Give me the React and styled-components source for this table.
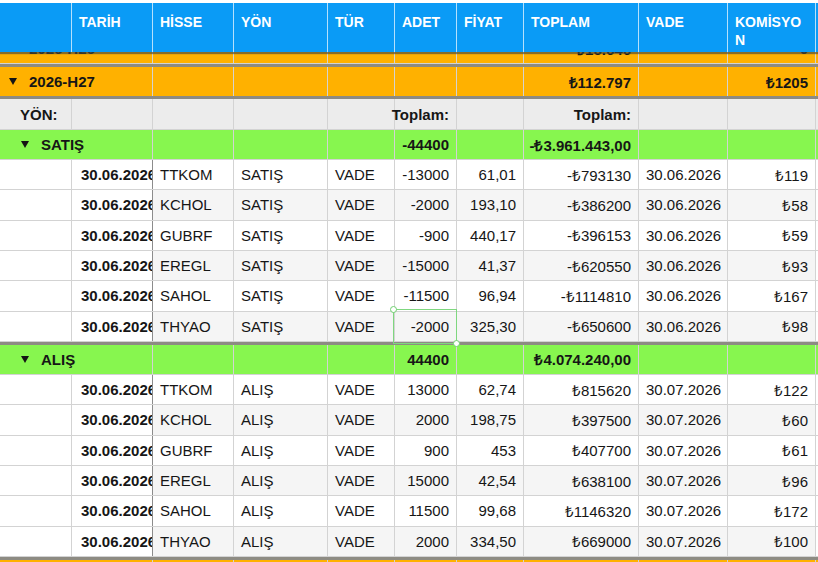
import React from 'react';
import styled, { createGlobalStyle } from 'styled-components';

const COLS = '72px 81px 81px 94px 67px 62px 67px 115px 89px 88px';

const GlobalStyle = createGlobalStyle`
  body {
    margin: 0;
    background: #fff;
    font-family: 'Liberation Sans', Arial, Helvetica, sans-serif;
  }
`;

const Sheet = styled.div`
  width: 818px;
  height: 562px;
  padding-top: 3px;
  box-sizing: border-box;
  display: flex;
  flex-direction: column;
  overflow: hidden;
`;

const HeaderRow = styled.div`
  display: grid;
  grid-template-columns: ${COLS};
  height: 49px;
  flex-shrink: 0;
  background: #0a9bf6;
  position: relative;
  z-index: 2;
  box-shadow: 0 2px 1px rgba(70, 70, 60, 0.65);
`;

const HeadCell = styled.div`
  padding: 10px 7px 0;
  color: #fff;
  font-size: 14px;
  font-weight: bold;
  line-height: 18px;
  word-break: break-all;
  border-right: 1px solid rgba(255, 255, 255, 0.7);
`;

const Body = styled.div`
  flex: 1;
  overflow: hidden;
`;

// first group row sits mostly under the sticky header
const Rows = styled.div`
  margin-top: -18px;
`;

const Row = styled.div`
  display: grid;
  grid-template-columns: ${COLS};
  box-sizing: border-box;
  height: ${(p) => p.$h}px;
  background: ${(p) => p.$bg || '#fff'};
  border-top: ${(p) => (p.$band ? '3px solid #8d8b83' : 'none')};
  border-bottom: ${(p) => (p.$bandBottom ? '3px solid #8d8b83' : '1px solid #d3d3d3')};
  color: #161616;
  font-size: 15px;
`;

const Cell = styled.div`
  display: flex;
  align-items: center;
  justify-content: ${(p) => (p.$right ? 'flex-end' : 'flex-start')};
  padding: 0 7px;
  white-space: nowrap;
  font-weight: ${(p) => (p.$bold ? 'bold' : 'normal')};
  background: ${(p) => (p.$shade ? '#f5f5f5' : 'transparent')};
  border-right: 1px solid ${(p) => (p.$frozenEdge ? '#8c8c8c' : '#d3d3d3')};
  position: relative;
`;

const DateCell = styled(Cell)`
  padding-left: 9px;
  overflow: hidden;
  font-weight: bold;
`;

const LabelCell = styled(Cell)`
  grid-column: span 2;
  padding-left: ${(p) => p.$indent}px;
  font-weight: bold;
`;

const FieldLabel = styled(Cell)`
  padding-left: 20px;
  font-weight: bold;
`;

const Caret = styled.span`
  width: 0;
  height: 0;
  border-left: 4px solid transparent;
  border-right: 4px solid transparent;
  border-top: 7px solid #141414;
  margin-right: 12px;
`;

const Selection = styled.span`
  position: absolute;
  top: -3px;
  left: -2px;
  right: -1px;
  bottom: -3px;
  border: 1px solid #7fd77f;
  z-index: 1;
  pointer-events: none;

  &::before,
  &::after {
    content: '';
    position: absolute;
    width: 5px;
    height: 5px;
    border-radius: 50%;
    background: #fff;
    border: 1px solid #6fcf6f;
  }
  &::before {
    top: -4px;
    left: -4px;
  }
  &::after {
    bottom: -4px;
    right: -4px;
  }
`;

const headers = ['', 'TARİH', 'HİSSE', 'YÖN', 'TÜR', 'ADET', 'FİYAT', 'TOPLAM', 'VADE', 'KOMİSYON'];

const sells = [
  ['TTKOM', '-13000', '61,01', '-₺793130', '₺119'],
  ['KCHOL', '-2000', '193,10', '-₺386200', '₺58'],
  ['GUBRF', '-900', '440,17', '-₺396153', '₺59'],
  ['EREGL', '-15000', '41,37', '-₺620550', '₺93'],
  ['SAHOL', '-11500', '96,94', '-₺1114810', '₺167'],
  ['THYAO', '-2000', '325,30', '-₺650600', '₺98'],
];

const buys = [
  ['TTKOM', '13000', '62,74', '₺815620', '₺122'],
  ['KCHOL', '2000', '198,75', '₺397500', '₺60'],
  ['GUBRF', '900', '453', '₺407700', '₺61'],
  ['EREGL', '15000', '42,54', '₺638100', '₺96'],
  ['SAHOL', '11500', '99,68', '₺1146320', '₺172'],
  ['THYAO', '2000', '334,50', '₺669000', '₺100'],
];

const ORANGE = '#ffb100';
const GREEN = '#87f64f';

function GroupRow({ label, indent, bg, total, adet, fee, h, band, bandBottom }) {
  return (
    <Row $bg={bg} $h={h} $band={band} $bandBottom={bandBottom}>
      <LabelCell $indent={indent}>
        <Caret />
        {label}
      </LabelCell>
      <Cell />
      <Cell />
      <Cell />
      <Cell $right $bold>{adet}</Cell>
      <Cell />
      <Cell $right $bold>{total}</Cell>
      <Cell />
      <Cell $right $bold>{fee}</Cell>
    </Row>
  );
}

function TradeRow({ trade, side, vade, index, selected }) {
  const [stock, adet, price, total, fee] = trade;
  const shade = index % 2 === 1;
  return (
    <Row $h={30.33}>
      <Cell />
      <DateCell $frozenEdge>30.06.2026</DateCell>
      <Cell $shade={shade}>{stock}</Cell>
      <Cell $shade={shade}>{side}</Cell>
      <Cell $shade={shade}>VADE</Cell>
      <Cell $shade={shade} $right>
        {adet}
        {selected && <Selection />}
      </Cell>
      <Cell $shade={shade} $right>{price}</Cell>
      <Cell $shade={shade} $right>{total}</Cell>
      <Cell $shade={shade}>{vade}</Cell>
      <Cell $shade={shade} $right>{fee}</Cell>
    </Row>
  );
}

export default function App() {
  return (
    <>
      <GlobalStyle />
      <Sheet>
        <HeaderRow>
          {headers.map((h, i) => (
            <HeadCell key={i}>{h}</HeadCell>
          ))}
        </HeaderRow>
        <Body>
          <Rows>
            <GroupRow label="2026-H26" indent={9} bg={ORANGE} total="₺15.646" fee="0" h={30} />
            <GroupRow
              label="2026-H27"
              indent={9}
              bg={ORANGE}
              total="₺112.797"
              fee="₺1205"
              h={35}
              band
              bandBottom
            />
            <Row $bg="#ececec" $h={31}>
              <FieldLabel>YÖN:</FieldLabel>
              <Cell />
              <Cell />
              <Cell />
              <Cell />
              <Cell $right $bold>Toplam:</Cell>
              <Cell />
              <Cell $right $bold>Toplam:</Cell>
              <Cell />
              <Cell />
            </Row>
            <GroupRow label="SATIŞ" indent={21} bg={GREEN} adet="-44400" total="-₺3.961.443,00" h={30} />
            {sells.map((t, i) => (
              <TradeRow key={t[0]} trade={t} side="SATIŞ" vade="30.06.2026" index={i} selected={i === 5} />
            ))}
            <GroupRow label="ALIŞ" indent={21} bg={GREEN} adet="44400" total="₺4.074.240,00" h={33} band />
            {buys.map((t, i) => (
              <TradeRow key={t[0]} trade={t} side="ALIŞ" vade="30.07.2026" index={i} />
            ))}
            <GroupRow label="2026-H28" indent={9} bg={ORANGE} total="₺98.410" fee="₺1180" h={35} band />
          </Rows>
        </Body>
      </Sheet>
    </>
  );
}
